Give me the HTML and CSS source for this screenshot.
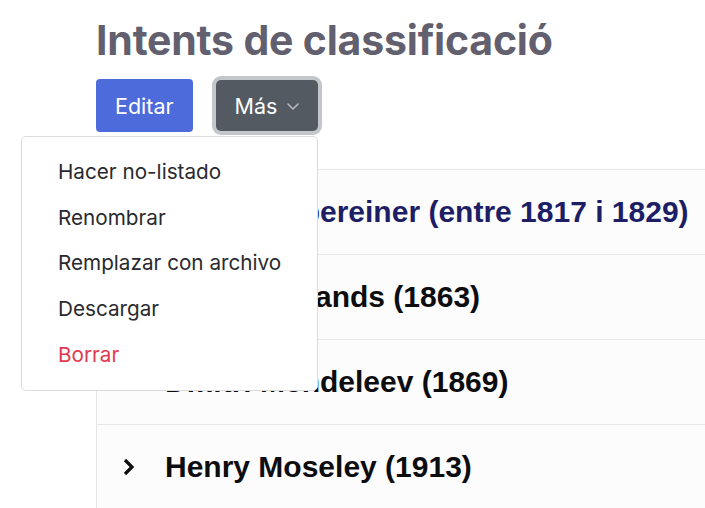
FILE: index.html
```html
<!DOCTYPE html>
<html lang="ca">
<head>
<meta charset="utf-8">
<link rel="stylesheet" href="styles.css">
</head>
<body>
<main class="page">
  <h1 class="title">Intents de classificació</h1>
  <div class="actions">
    <button class="btn btn-primary">Editar</button>
    <div class="more">
      <button class="btn btn-dark">Más
        <svg class="caret" width="12" height="7" viewBox="0 0 12 7"><path d="M1 1l5 5 5-5" fill="none" stroke="#b4b8bd" stroke-width="1.6" stroke-linecap="round" stroke-linejoin="round"/></svg>
      </button>
    </div>
    <ul class="menu">
      <li>Hacer no-listado</li>
      <li>Renombrar</li>
      <li>Remplazar con archivo</li>
      <li>Descargar</li>
      <li class="danger">Borrar</li>
    </ul>
  </div>
  <ul class="list">
    <li class="row visited"><svg class="chev" width="12" height="18" viewBox="0 0 12 18"><path d="M2 2l7 7-7 7" fill="none" stroke="currentColor" stroke-width="3.2"/></svg><span>Johan Döbereiner (entre 1817 i 1829)</span></li>
    <li class="row"><svg class="chev" width="12" height="18" viewBox="0 0 12 18"><path d="M2 2l7 7-7 7" fill="none" stroke="currentColor" stroke-width="3.2"/></svg><span>John Newlands (1863)</span></li>
    <li class="row"><svg class="chev" width="12" height="18" viewBox="0 0 12 18"><path d="M2 2l7 7-7 7" fill="none" stroke="currentColor" stroke-width="3.2"/></svg><span>Dmitri Mendeleev (1869)</span></li>
    <li class="row"><svg class="chev" width="12" height="18" viewBox="0 0 12 18"><path d="M2 2l7 7-7 7" fill="none" stroke="currentColor" stroke-width="3.2"/></svg><span>Henry Moseley (1913)</span></li>
  </ul>
</main>
</body>
</html>
```
FILE: styles.css
```css
html, body {
  margin: 0;
  padding: 0;
  background: #ffffff;
  overflow: hidden;
}
.page {
  padding-left: 96px;
  font-family: Inter, "Noto Sans", sans-serif;
}
.title {
  margin: 15px 0 0;
  font-size: 41px;
  line-height: 50px;
  font-weight: 700;
  letter-spacing: -0.2px;
  color: #62606f;
}
.actions {
  position: relative;
  display: flex;
  align-items: flex-start;
  gap: 23px;
  margin-top: 14px;
}
.btn {
  font-family: Inter, "Noto Sans", sans-serif;
  font-size: 21.5px;
  color: #ffffff;
  border: 0;
  border-radius: 4px;
  height: 53px;
  padding: 0 19px;
  display: flex;
  align-items: center;
  gap: 10px;
}
.btn-primary {
  background: #4e6bdb;
}
.more {
  display: flex;
}
.btn-dark {
  background: #545a62;
  height: 51px;
  margin-top: 1px;
  padding: 0 19px;
  box-shadow: 0 0 0 4px #c3c6ca;
  border-radius: 5px;
}
.caret {
  margin-top: 1px;
}
.menu {
  position: absolute;
  left: -75px;
  top: 57px;
  width: 295px;
  margin: 0;
  padding: 12px 0;
  list-style: none;
  background: #ffffff;
  border: 1px solid #dcdcdf;
  border-radius: 5px;
  z-index: 2;
}
.menu li {
  padding-left: 36px;
  font-size: 20.7px;
  line-height: 45.7px;
  color: #2a2a2e;
}
.menu li.danger {
  color: #e0394f;
}
.list {
  list-style: none;
  margin: 37px 0 0;
  padding: 0;
  border-left: 1px solid #e6e6e8;
}
.row {
  display: flex;
  align-items: center;
  height: 84px;
  border-top: 1px solid #e8e8ea;
  background: #fcfcfd;
  padding-left: 26px;
  font-family: "Liberation Sans", Arial, sans-serif;
  font-weight: 700;
  font-size: 30px;
  color: #0d0d10;
}
.row .chev {
  margin-right: 30px;
  flex: none;
}
.row.visited {
  color: #1e1e66;
}
```
